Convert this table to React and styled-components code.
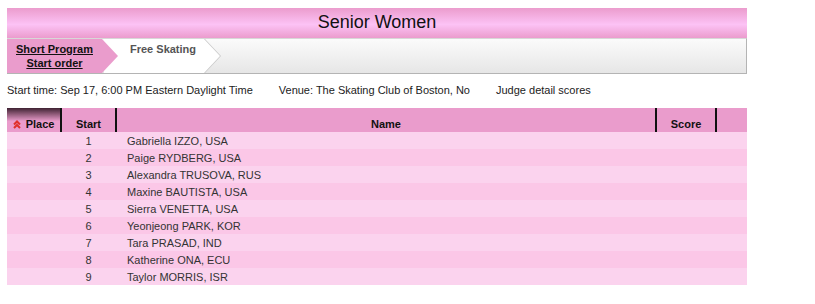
import styled, { createGlobalStyle } from "styled-components";

const GlobalStyle = createGlobalStyle`
  body {
    margin: 8px 7px;
    font-family: "Liberation Sans", Arial, sans-serif;
    background: #fff;
  }
`;

const Page = styled.div`
  width: 740px;
`;

const TitleBar = styled.div`
  height: 30px;
  line-height: 29px;
  text-align: center;
  font-size: 18px;
  color: #111;
  background: linear-gradient(#eb9ccd, #fcc2f5 55%, #eb9ccd);
`;

const Crumbs = styled.div`
  height: 34px;
  display: flex;
  border-right: 1px solid #b4b4b4;
  border-bottom: 1px solid #b4b4b4;
  border-top: 1px solid #d8d8d8;
  background: linear-gradient(#fbfbfb, #e6e6e6);
  overflow: hidden;
`;

const Crumb = styled.div`
  position: relative;
  flex: none;
  width: ${(p) => p.width}px;
  margin-right: ${(p) => (p.overlap ? -p.width : -14)}px;
  padding: 3px 16px 0 ${(p) => p.pad}px;
  box-sizing: border-box;
  background: ${(p) => p.bg};
  clip-path: polygon(0 0, calc(100% - 16px) 0, 100% 50%, calc(100% - 16px) 100%, 0 100%);
  z-index: ${(p) => p.z};
  font-size: 11px;
  font-weight: bold;
  line-height: 14px;
  color: ${(p) => (p.active ? "#111" : "#555")};
  text-align: ${(p) => (p.active ? "center" : "left")};
`;

const CrumbLink = styled.a`
  display: block;
  color: inherit;
  text-decoration: underline;
`;

const InfoLine = styled.div`
  display: flex;
  gap: 26px;
  margin-top: 10px;
  font-size: 11px;
  color: #222;
  height: 15px;
`;

const Table = styled.table`
  margin-top: 9px;
  width: 740px;
  border-collapse: collapse;
  font-size: 11px;
  table-layout: fixed;
`;

const Th = styled.th`
  height: 24px;
  padding: 7px 0 0;
  box-sizing: border-box;
  width: ${(p) => p.width || "auto"};
  background: ${(p) =>
    p.sorted ? "linear-gradient(#3f2233, #8e5a78 25%, #ea9ccc 55%)" : "#ea9ccc"};
  border-right: ${(p) => (p.last ? "none" : "2px solid #111")};
  color: #111;
  font-weight: bold;
  text-align: center;
  vertical-align: middle;
`;

const Arrow = styled.svg`
  margin-right: 5px;
  vertical-align: -1px;
`;

const Row = styled.tr`
  background: ${(p) => (p.odd ? "#fbd3ee" : "#fbc7e7")};
  height: 17px;
`;

const Td = styled.td`
  padding: 0;
  color: #333;
  text-align: ${(p) => p.align || "left"};
  padding-left: ${(p) => p.indent || 0}px;
`;

const skaters = [
  "Gabriella IZZO, USA",
  "Paige RYDBERG, USA",
  "Alexandra TRUSOVA, RUS",
  "Maxine BAUTISTA, USA",
  "Sierra VENETTA, USA",
  "Yeonjeong PARK, KOR",
  "Tara PRASAD, IND",
  "Katherine ONA, ECU",
  "Taylor MORRIS, ISR",
];

const App = () => (
  <Page>
    <GlobalStyle />
    <TitleBar>Senior Women</TitleBar>
    <Crumbs>
      <Crumb active bg="#ea9ccc" width={111} pad={0} z={3}>
        <CrumbLink href="#">Short Program</CrumbLink>
        <CrumbLink href="#">Start order</CrumbLink>
      </Crumb>
      <Crumb overlap bg="#c8c8c8" width={117} pad={0} z={1} />
      <Crumb bg="#fff" width={116} pad={26} z={2}>
        Free Skating
      </Crumb>
    </Crumbs>
    <InfoLine>
      <span>Start time: Sep 17, 6:00 PM Eastern Daylight Time</span>
      <span>Venue: The Skating Club of Boston, No</span>
      <span>Judge detail scores</span>
    </InfoLine>
    <Table>
      <thead>
        <tr>
          <Th sorted width="54px">
            <Arrow width="8" height="9" viewBox="0 0 8 9">
              <path d="M1 4.5 L4 1.5 L7 4.5 M1 8 L4 5 L7 8" stroke="#e0302a" strokeWidth="2" fill="none" />
            </Arrow>
            Place
          </Th>
          <Th width="55px">Start</Th>
          <Th>Name</Th>
          <Th width="60px">Score</Th>
          <Th last width="31px" />
        </tr>
      </thead>
      <tbody>
        {skaters.map((name, i) => (
          <Row key={name} odd={i % 2 === 0}>
            <Td />
            <Td align="center">{i + 1}</Td>
            <Td indent={11}>{name}</Td>
            <Td />
            <Td />
          </Row>
        ))}
      </tbody>
    </Table>
  </Page>
);

export default App;
